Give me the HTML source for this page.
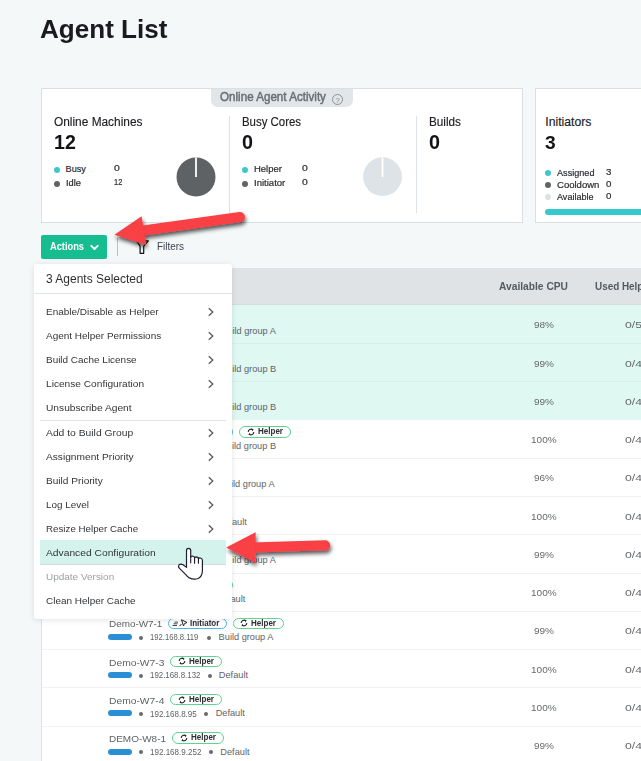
<!DOCTYPE html><html><head><meta charset="utf-8"><style>
html,body{margin:0;padding:0;}
body{width:641px;height:761px;overflow:hidden;position:relative;background:#f5f8f9;font-family:"Liberation Sans",sans-serif;}
.t{position:absolute;white-space:nowrap;line-height:1;transform-origin:0 0;}
.b{position:absolute;}
</style></head><body>
<div class="t" style="left:40.00px;top:15.65px;font-size:26.16px;color:#1b1b1f;font-weight:bold;transform:scaleX(0.997);">Agent List</div>
<div class="b" style="left:41.00px;top:88.00px;width:482.00px;height:135.00px;background:#fff;border:1px solid #d9dfe3;box-sizing:border-box;"></div>
<div class="b" style="left:211.00px;top:89.00px;width:142.00px;height:18.00px;background:#e2e6e9;border-radius:0 0 7px 7px;"></div>
<div class="t" style="left:220.00px;top:92.41px;font-size:11.92px;color:#686d72;transform:scaleX(0.976);-webkit-text-stroke:0.45px #686d72;">Online Agent Activity</div>
<svg class="b" style="left:331px;top:93px;width:13px;height:13px" viewBox="0 0 13 13"><circle cx="6.5" cy="6.5" r="5" fill="none" stroke="#8a9095" stroke-width="1"/><text x="6.5" y="9.6" font-size="8" text-anchor="middle" fill="#8a9095" font-family="Liberation Sans">?</text></svg>
<div class="b" style="left:229.00px;top:116.00px;width:1.00px;height:97.00px;background:#dde2e6;"></div>
<div class="b" style="left:416.00px;top:116.00px;width:1.00px;height:97.00px;background:#dde2e6;"></div>
<div class="t" style="left:54.00px;top:114.93px;font-size:13.08px;color:#202124;transform:scaleX(0.908);-webkit-text-stroke:0.15px #202124;">Online Machines</div>
<div class="t" style="left:54.00px;top:131.77px;font-size:20.35px;color:#121316;font-weight:bold;transform:scaleX(0.963);">12</div>
<div class="b" style="left:53.80px;top:166.65px;width:6.20px;height:6.20px;background:#3ec6cf;border-radius:50%;"></div>
<div class="t" style="left:65.60px;top:164.80px;font-size:9.16px;color:#2b2d30;-webkit-text-stroke:0.2px #2b2d30;">Busy</div>
<div class="t" style="left:114.00px;top:164.12px;font-size:9.01px;color:#2b2d30;transform:scaleX(1.157);-webkit-text-stroke:0.2px #2b2d30;">0</div>
<div class="b" style="left:53.80px;top:180.90px;width:6.20px;height:6.20px;background:#5f6467;border-radius:50%;"></div>
<div class="t" style="left:65.60px;top:179.05px;font-size:9.16px;color:#2b2d30;transform:scaleX(1.016);-webkit-text-stroke:0.2px #2b2d30;">Idle</div>
<div class="t" style="left:114.00px;top:178.37px;font-size:9.01px;color:#2b2d30;transform:scaleX(0.828);-webkit-text-stroke:0.2px #2b2d30;">12</div>
<div class="t" style="left:242.00px;top:114.93px;font-size:13.08px;color:#202124;transform:scaleX(0.873);-webkit-text-stroke:0.15px #202124;">Busy Cores</div>
<div class="t" style="left:242.00px;top:131.77px;font-size:20.35px;color:#121316;font-weight:bold;transform:scaleX(0.972);">0</div>
<div class="b" style="left:241.80px;top:166.65px;width:6.20px;height:6.20px;background:#3ec6cf;border-radius:50%;"></div>
<div class="t" style="left:253.60px;top:164.80px;font-size:9.16px;color:#2b2d30;transform:scaleX(1.034);-webkit-text-stroke:0.2px #2b2d30;">Helper</div>
<div class="t" style="left:302.00px;top:164.12px;font-size:9.01px;color:#2b2d30;transform:scaleX(1.157);-webkit-text-stroke:0.2px #2b2d30;">0</div>
<div class="b" style="left:241.80px;top:180.90px;width:6.20px;height:6.20px;background:#5f6467;border-radius:50%;"></div>
<div class="t" style="left:253.60px;top:179.05px;font-size:9.16px;color:#2b2d30;transform:scaleX(1.042);-webkit-text-stroke:0.2px #2b2d30;">Initiator</div>
<div class="t" style="left:302.00px;top:178.37px;font-size:9.01px;color:#2b2d30;transform:scaleX(1.157);-webkit-text-stroke:0.2px #2b2d30;">0</div>
<div class="t" style="left:429.00px;top:114.93px;font-size:13.08px;color:#202124;transform:scaleX(0.898);-webkit-text-stroke:0.15px #202124;">Builds</div>
<div class="t" style="left:429.00px;top:131.77px;font-size:20.35px;color:#121316;font-weight:bold;transform:scaleX(0.972);">0</div>
<svg class="b" style="left:176px;top:157px;width:40px;height:40px" viewBox="0 0 40 40"><circle cx="20" cy="20" r="19.5" fill="#5e6265"/><rect x="19.1" y="0.5" width="1.8" height="19.5" fill="#fff"/></svg>
<svg class="b" style="left:363px;top:157px;width:40px;height:40px" viewBox="0 0 40 40"><circle cx="19.5" cy="19.7" r="19.4" fill="#dde3e7"/><rect x="18.6" y="0.5" width="1.8" height="19.5" fill="#fff"/></svg>
<div class="b" style="left:535.00px;top:88.00px;width:120.00px;height:135.00px;background:#fff;border:1px solid #d9dfe3;box-sizing:border-box;"></div>
<div class="t" style="left:545.30px;top:115.96px;font-size:12.21px;color:#202124;-webkit-text-stroke:0.15px #202124;">Initiators</div>
<div class="t" style="left:545.30px;top:133.62px;font-size:18.17px;color:#121316;font-weight:bold;transform:scaleX(1.059);">3</div>
<div class="b" style="left:545.20px;top:169.80px;width:6.00px;height:6.00px;background:#3ec6cf;border-radius:50%;"></div>
<div class="t" style="left:557.40px;top:168.55px;font-size:9.16px;color:#2b2d30;transform:scaleX(0.995);-webkit-text-stroke:0.2px #2b2d30;">Assigned</div>
<div class="t" style="left:605.60px;top:167.57px;font-size:9.01px;color:#2b2d30;transform:scaleX(1.077);-webkit-text-stroke:0.2px #2b2d30;">3</div>
<div class="b" style="left:545.20px;top:181.90px;width:6.00px;height:6.00px;background:#5f6467;border-radius:50%;"></div>
<div class="t" style="left:557.40px;top:180.65px;font-size:9.16px;color:#2b2d30;transform:scaleX(1.041);-webkit-text-stroke:0.2px #2b2d30;">Cooldown</div>
<div class="t" style="left:605.60px;top:179.67px;font-size:9.01px;color:#2b2d30;transform:scaleX(1.077);-webkit-text-stroke:0.2px #2b2d30;">0</div>
<div class="b" style="left:545.20px;top:194.00px;width:6.00px;height:6.00px;background:#dde1e3;border-radius:50%;"></div>
<div class="t" style="left:557.40px;top:192.75px;font-size:9.16px;color:#2b2d30;transform:scaleX(0.987);-webkit-text-stroke:0.2px #2b2d30;">Available</div>
<div class="t" style="left:605.60px;top:191.77px;font-size:9.01px;color:#2b2d30;transform:scaleX(1.077);-webkit-text-stroke:0.2px #2b2d30;">0</div>
<div class="b" style="left:545.00px;top:208.80px;width:120.00px;height:6.00px;background:#35c8cc;border-radius:3px;"></div>
<div class="b" style="left:41.00px;top:235.00px;width:66.00px;height:23.75px;background:#16bd90;border-radius:2px;"></div>
<div class="t" style="left:50.00px;top:241.02px;font-size:10.61px;color:#fff;font-weight:bold;transform:scaleX(0.874);">Actions</div>
<svg class="b" style="left:89px;top:243px;width:11px;height:9px" viewBox="0 0 11 9"><path d="M2.3 2.9 L5.5 6 L8.7 2.9" fill="none" stroke="#fff" stroke-width="2" stroke-linecap="round" stroke-linejoin="round"/></svg>
<div class="b" style="left:116.60px;top:237.50px;width:1.30px;height:18.50px;background:#b9bfc4;"></div>
<svg class="b" style="left:134px;top:238px;width:18px;height:18px" viewBox="0 0 18 18"><path d="M2.6 2.8 L14.4 2.8 L9.7 8.2 L9.7 15.3 L6.1 15.3 L6.1 8.2 Z" fill="none" stroke="#111" stroke-width="1.2" stroke-linejoin="round"/></svg>
<div class="t" style="left:157.00px;top:240.26px;font-size:11.63px;color:#3c4150;transform:scaleX(0.853);">Filters</div>
<div class="b" style="left:41.00px;top:268.30px;width:620.00px;height:36.40px;background:#dfe3e6;"></div>
<div class="b" style="left:40.90px;top:304.70px;width:1.00px;height:500.00px;background:#dfe3e6;"></div>
<div class="b" style="left:41.00px;top:303.80px;width:620.00px;height:1.00px;background:#d6dbde;"></div>
<div class="t" style="left:499.30px;top:280.58px;font-size:11.48px;color:#545a60;font-weight:bold;transform:scaleX(0.892);">Available CPU</div>
<div class="t" style="left:595.00px;top:280.58px;font-size:11.48px;color:#545a60;font-weight:bold;transform:scaleX(0.862);">Used Helpers</div>
<div class="b" style="left:41.90px;top:304.90px;width:620.00px;height:38.25px;background:#e0f8f2;"></div>
<div class="t" style="left:533.80px;top:321.32px;font-size:8.72px;color:#65686b;transform:scaleX(1.146);">98%</div>
<div class="t" style="left:624.80px;top:321.32px;font-size:8.72px;color:#65686b;transform:scaleX(1.402);">0/5</div>
<div class="t" style="left:108.50px;top:314.47px;font-size:9.01px;color:#5f6366;transform:scaleX(1.101);">Demo-W1-1</div>
<div class="b" style="left:107.80px;top:327.90px;width:24.30px;height:6.00px;background:#2b8fd6;border-radius:3px;"></div>
<div class="b" style="left:139.00px;top:329.60px;width:4.00px;height:4.00px;background:#666a6e;border-radius:50%;"></div>
<div class="t" style="left:150.30px;top:328.01px;font-size:8.14px;color:#5f6366;transform:scaleX(0.974);">192.168.8.101</div>
<div class="b" style="left:209.06px;top:329.60px;width:4.00px;height:4.00px;background:#666a6e;border-radius:50%;"></div>
<div class="t" style="left:221.12px;top:326.89px;font-size:9.23px;color:#5f6366;">Build group A</div>
<div class="b" style="left:41.90px;top:343.15px;width:620.00px;height:38.25px;background:#e0f8f2;"></div>
<div class="b" style="left:41.90px;top:343.15px;width:620.00px;height:1.00px;background:#d8efe9;"></div>
<div class="t" style="left:533.80px;top:359.57px;font-size:8.72px;color:#65686b;transform:scaleX(1.146);">99%</div>
<div class="t" style="left:624.80px;top:359.57px;font-size:8.72px;color:#65686b;transform:scaleX(1.402);">0/4</div>
<div class="t" style="left:108.50px;top:352.72px;font-size:9.01px;color:#5f6366;transform:scaleX(1.101);">Demo-W2-1</div>
<div class="b" style="left:107.80px;top:366.15px;width:24.30px;height:6.00px;background:#2b8fd6;border-radius:3px;"></div>
<div class="b" style="left:139.00px;top:367.85px;width:4.00px;height:4.00px;background:#666a6e;border-radius:50%;"></div>
<div class="t" style="left:150.30px;top:366.26px;font-size:8.14px;color:#5f6366;transform:scaleX(0.974);">192.168.8.102</div>
<div class="b" style="left:208.96px;top:367.85px;width:4.00px;height:4.00px;background:#666a6e;border-radius:50%;"></div>
<div class="t" style="left:220.92px;top:365.14px;font-size:9.23px;color:#5f6366;">Build group B</div>
<div class="b" style="left:41.90px;top:381.40px;width:620.00px;height:38.25px;background:#e0f8f2;"></div>
<div class="b" style="left:41.90px;top:381.40px;width:620.00px;height:1.00px;background:#d8efe9;"></div>
<div class="t" style="left:533.80px;top:397.82px;font-size:8.72px;color:#65686b;transform:scaleX(1.146);">99%</div>
<div class="t" style="left:624.80px;top:397.82px;font-size:8.72px;color:#65686b;transform:scaleX(1.402);">0/4</div>
<div class="t" style="left:108.50px;top:390.97px;font-size:9.01px;color:#5f6366;transform:scaleX(1.101);">Demo-W3-1</div>
<div class="b" style="left:107.80px;top:404.40px;width:24.30px;height:6.00px;background:#2b8fd6;border-radius:3px;"></div>
<div class="b" style="left:139.00px;top:406.10px;width:4.00px;height:4.00px;background:#666a6e;border-radius:50%;"></div>
<div class="t" style="left:150.30px;top:404.51px;font-size:8.14px;color:#5f6366;transform:scaleX(0.974);">192.168.8.103</div>
<div class="b" style="left:208.96px;top:406.10px;width:4.00px;height:4.00px;background:#666a6e;border-radius:50%;"></div>
<div class="t" style="left:220.92px;top:403.39px;font-size:9.23px;color:#5f6366;">Build group B</div>
<div class="b" style="left:41.90px;top:419.65px;width:620.00px;height:38.25px;background:#ffffff;"></div>
<div class="t" style="left:531.00px;top:436.07px;font-size:8.72px;color:#65686b;transform:scaleX(1.148);">100%</div>
<div class="t" style="left:624.80px;top:436.07px;font-size:8.72px;color:#65686b;transform:scaleX(1.402);">0/4</div>
<div class="t" style="left:108.50px;top:429.22px;font-size:9.01px;color:#5f6366;transform:scaleX(1.229);">Demo-W4-1</div>
<div class="b" style="left:107.80px;top:442.65px;width:24.30px;height:6.00px;background:#2b8fd6;border-radius:3px;"></div>
<div class="b" style="left:139.00px;top:444.35px;width:4.00px;height:4.00px;background:#666a6e;border-radius:50%;"></div>
<div class="t" style="left:150.30px;top:442.76px;font-size:8.14px;color:#5f6366;transform:scaleX(0.974);">192.168.8.104</div>
<div class="b" style="left:208.86px;top:444.35px;width:4.00px;height:4.00px;background:#666a6e;border-radius:50%;"></div>
<div class="t" style="left:220.72px;top:441.64px;font-size:9.23px;color:#5f6366;">Build group B</div>
<div class="b" style="left:174.60px;top:426.35px;width:58.8px;height:11.2px;border:1px solid #4cb5e6;border-radius:6px;box-sizing:border-box;background:#fff"></div>
<svg class="b" style="left:178.60px;top:427.85px;width:16px;height:8px" viewBox="0 0 16 8"><path d="M0.5 6.5 H5 M1.5 4.8 H5.5 M2.5 3.1 H6" stroke="#333" stroke-width="0.9"/><path d="M9.5 0.8 L15 3.5 L12.5 4.5 L11.5 7 Z M9.5 5 L7.5 7.2" fill="none" stroke="#222" stroke-width="1"/></svg>
<div class="t" style="left:196.60px;top:427.30px;font-size:9.16px;color:#2a2d31;font-weight:bold;transform:scaleX(0.873);">Initiator</div>
<div class="b" style="left:239.00px;top:426.35px;width:51.5px;height:11.2px;border:1px solid #5dd590;border-radius:6px;box-sizing:border-box;background:#fff"></div>
<svg class="b" style="left:246.60px;top:427.95px;width:8px;height:8px" viewBox="0 0 8 8"><path d="M1.2 4 A2.8 2.8 0 0 1 5.8 1.8 M6.8 4 A2.8 2.8 0 0 1 2.2 6.2" fill="none" stroke="#222" stroke-width="1.1"/><path d="M4.6 0.6 L6.6 1.6 L5.4 3.2Z M3.4 7.4 L1.4 6.4 L2.6 4.8Z" fill="#222"/></svg>
<div class="t" style="left:257.70px;top:427.30px;font-size:9.16px;color:#2a2d31;font-weight:bold;transform:scaleX(0.877);">Helper</div>
<div class="b" style="left:41.90px;top:457.90px;width:620.00px;height:38.25px;background:#ffffff;"></div>
<div class="b" style="left:41.90px;top:457.90px;width:620.00px;height:1.00px;background:#f0f2f3;"></div>
<div class="t" style="left:533.80px;top:474.32px;font-size:8.72px;color:#65686b;transform:scaleX(1.146);">96%</div>
<div class="t" style="left:624.80px;top:474.32px;font-size:8.72px;color:#65686b;transform:scaleX(1.402);">0/4</div>
<div class="t" style="left:108.50px;top:467.47px;font-size:9.01px;color:#5f6366;transform:scaleX(1.101);">Demo-W5-1</div>
<div class="b" style="left:107.80px;top:480.90px;width:24.30px;height:6.00px;background:#2b8fd6;border-radius:3px;"></div>
<div class="b" style="left:139.00px;top:482.60px;width:4.00px;height:4.00px;background:#666a6e;border-radius:50%;"></div>
<div class="t" style="left:150.30px;top:481.01px;font-size:8.14px;color:#5f6366;transform:scaleX(0.974);">192.168.8.105</div>
<div class="b" style="left:208.36px;top:482.60px;width:4.00px;height:4.00px;background:#666a6e;border-radius:50%;"></div>
<div class="t" style="left:219.72px;top:479.89px;font-size:9.23px;color:#5f6366;">Build group A</div>
<div class="b" style="left:41.90px;top:496.15px;width:620.00px;height:38.25px;background:#ffffff;"></div>
<div class="b" style="left:41.90px;top:496.15px;width:620.00px;height:1.00px;background:#f0f2f3;"></div>
<div class="t" style="left:531.00px;top:512.57px;font-size:8.72px;color:#65686b;transform:scaleX(1.148);">100%</div>
<div class="t" style="left:624.80px;top:512.57px;font-size:8.72px;color:#65686b;transform:scaleX(1.402);">0/4</div>
<div class="t" style="left:108.50px;top:505.72px;font-size:9.01px;color:#5f6366;transform:scaleX(1.101);">Demo-W5-2</div>
<div class="b" style="left:107.80px;top:519.15px;width:24.30px;height:6.00px;background:#2b8fd6;border-radius:3px;"></div>
<div class="b" style="left:139.00px;top:520.85px;width:4.00px;height:4.00px;background:#666a6e;border-radius:50%;"></div>
<div class="t" style="left:150.30px;top:519.26px;font-size:8.14px;color:#5f6366;transform:scaleX(0.974);">192.168.8.106</div>
<div class="b" style="left:207.31px;top:520.85px;width:4.00px;height:4.00px;background:#666a6e;border-radius:50%;"></div>
<div class="t" style="left:217.63px;top:518.14px;font-size:9.23px;color:#5f6366;">Default</div>
<div class="b" style="left:41.90px;top:534.40px;width:620.00px;height:38.25px;background:#ffffff;"></div>
<div class="b" style="left:41.90px;top:534.40px;width:620.00px;height:1.00px;background:#f0f2f3;"></div>
<div class="t" style="left:533.80px;top:550.82px;font-size:8.72px;color:#65686b;transform:scaleX(1.146);">99%</div>
<div class="t" style="left:624.80px;top:550.82px;font-size:8.72px;color:#65686b;transform:scaleX(1.402);">0/4</div>
<div class="t" style="left:108.50px;top:543.97px;font-size:9.01px;color:#5f6366;transform:scaleX(1.101);">Demo-W6-1</div>
<div class="b" style="left:107.80px;top:557.40px;width:24.30px;height:6.00px;background:#2b8fd6;border-radius:3px;"></div>
<div class="b" style="left:139.00px;top:559.10px;width:4.00px;height:4.00px;background:#666a6e;border-radius:50%;"></div>
<div class="t" style="left:150.30px;top:557.51px;font-size:8.14px;color:#5f6366;transform:scaleX(0.974);">192.168.8.107</div>
<div class="b" style="left:209.01px;top:559.10px;width:4.00px;height:4.00px;background:#666a6e;border-radius:50%;"></div>
<div class="t" style="left:221.02px;top:556.39px;font-size:9.23px;color:#5f6366;">Build group A</div>
<div class="b" style="left:41.90px;top:572.65px;width:620.00px;height:38.25px;background:#ffffff;"></div>
<div class="b" style="left:41.90px;top:572.65px;width:620.00px;height:1.00px;background:#f0f2f3;"></div>
<div class="t" style="left:531.00px;top:589.07px;font-size:8.72px;color:#65686b;transform:scaleX(1.148);">100%</div>
<div class="t" style="left:624.80px;top:589.07px;font-size:8.72px;color:#65686b;transform:scaleX(1.402);">0/4</div>
<div class="t" style="left:108.50px;top:582.22px;font-size:9.01px;color:#5f6366;transform:scaleX(1.373);">Demo-W6-2</div>
<div class="b" style="left:107.80px;top:595.65px;width:24.30px;height:6.00px;background:#2b8fd6;border-radius:3px;"></div>
<div class="b" style="left:139.00px;top:597.35px;width:4.00px;height:4.00px;background:#666a6e;border-radius:50%;"></div>
<div class="t" style="left:150.30px;top:595.76px;font-size:8.14px;color:#5f6366;transform:scaleX(0.974);">192.168.8.108</div>
<div class="b" style="left:206.56px;top:597.35px;width:4.00px;height:4.00px;background:#666a6e;border-radius:50%;"></div>
<div class="t" style="left:216.13px;top:594.64px;font-size:9.23px;color:#5f6366;">Default</div>
<div class="b" style="left:181.60px;top:579.35px;width:51.5px;height:11.2px;border:1px solid #5dd590;border-radius:6px;box-sizing:border-box;background:#fff"></div>
<svg class="b" style="left:189.20px;top:580.95px;width:8px;height:8px" viewBox="0 0 8 8"><path d="M1.2 4 A2.8 2.8 0 0 1 5.8 1.8 M6.8 4 A2.8 2.8 0 0 1 2.2 6.2" fill="none" stroke="#222" stroke-width="1.1"/><path d="M4.6 0.6 L6.6 1.6 L5.4 3.2Z M3.4 7.4 L1.4 6.4 L2.6 4.8Z" fill="#222"/></svg>
<div class="t" style="left:200.30px;top:580.30px;font-size:9.16px;color:#2a2d31;font-weight:bold;transform:scaleX(0.877);">Helper</div>
<div class="b" style="left:41.90px;top:610.90px;width:620.00px;height:38.25px;background:#ffffff;"></div>
<div class="b" style="left:41.90px;top:610.90px;width:620.00px;height:1.00px;background:#f0f2f3;"></div>
<div class="t" style="left:533.80px;top:627.32px;font-size:8.72px;color:#65686b;transform:scaleX(1.146);">99%</div>
<div class="t" style="left:624.80px;top:627.32px;font-size:8.72px;color:#65686b;transform:scaleX(1.402);">0/4</div>
<div class="t" style="left:108.50px;top:620.47px;font-size:9.01px;color:#5f6366;transform:scaleX(1.099);">Demo-W7-1</div>
<div class="b" style="left:107.80px;top:633.90px;width:24.30px;height:6.00px;background:#2b8fd6;border-radius:3px;"></div>
<div class="b" style="left:139.00px;top:635.60px;width:4.00px;height:4.00px;background:#666a6e;border-radius:50%;"></div>
<div class="t" style="left:150.30px;top:634.01px;font-size:8.14px;color:#5f6366;transform:scaleX(0.941);">192.168.8.119</div>
<div class="b" style="left:206.66px;top:635.60px;width:4.00px;height:4.00px;background:#666a6e;border-radius:50%;"></div>
<div class="t" style="left:218.62px;top:632.89px;font-size:9.23px;color:#5f6366;">Build group A</div>
<div class="b" style="left:168.30px;top:617.60px;width:58.8px;height:11.2px;border:1px solid #4cb5e6;border-radius:6px;box-sizing:border-box;background:#fff"></div>
<svg class="b" style="left:172.30px;top:619.10px;width:16px;height:8px" viewBox="0 0 16 8"><path d="M0.5 6.5 H5 M1.5 4.8 H5.5 M2.5 3.1 H6" stroke="#333" stroke-width="0.9"/><path d="M9.5 0.8 L15 3.5 L12.5 4.5 L11.5 7 Z M9.5 5 L7.5 7.2" fill="none" stroke="#222" stroke-width="1"/></svg>
<div class="t" style="left:190.30px;top:618.55px;font-size:9.16px;color:#2a2d31;font-weight:bold;transform:scaleX(0.873);">Initiator</div>
<div class="b" style="left:232.70px;top:617.60px;width:51.5px;height:11.2px;border:1px solid #5dd590;border-radius:6px;box-sizing:border-box;background:#fff"></div>
<svg class="b" style="left:240.30px;top:619.20px;width:8px;height:8px" viewBox="0 0 8 8"><path d="M1.2 4 A2.8 2.8 0 0 1 5.8 1.8 M6.8 4 A2.8 2.8 0 0 1 2.2 6.2" fill="none" stroke="#222" stroke-width="1.1"/><path d="M4.6 0.6 L6.6 1.6 L5.4 3.2Z M3.4 7.4 L1.4 6.4 L2.6 4.8Z" fill="#222"/></svg>
<div class="t" style="left:251.40px;top:618.55px;font-size:9.16px;color:#2a2d31;font-weight:bold;transform:scaleX(0.877);">Helper</div>
<div class="b" style="left:41.90px;top:649.15px;width:620.00px;height:38.25px;background:#ffffff;"></div>
<div class="b" style="left:41.90px;top:649.15px;width:620.00px;height:1.00px;background:#f0f2f3;"></div>
<div class="t" style="left:531.00px;top:665.57px;font-size:8.72px;color:#65686b;transform:scaleX(1.148);">100%</div>
<div class="t" style="left:624.80px;top:665.57px;font-size:8.72px;color:#65686b;transform:scaleX(1.402);">0/4</div>
<div class="t" style="left:108.50px;top:658.72px;font-size:9.01px;color:#5f6366;transform:scaleX(1.143);">Demo-W7-3</div>
<div class="b" style="left:107.80px;top:672.15px;width:24.30px;height:6.00px;background:#2b8fd6;border-radius:3px;"></div>
<div class="b" style="left:139.00px;top:673.85px;width:4.00px;height:4.00px;background:#666a6e;border-radius:50%;"></div>
<div class="t" style="left:150.30px;top:672.26px;font-size:8.14px;color:#5f6366;transform:scaleX(0.970);">192.168.8.132</div>
<div class="b" style="left:207.81px;top:673.85px;width:4.00px;height:4.00px;background:#666a6e;border-radius:50%;"></div>
<div class="t" style="left:218.83px;top:671.14px;font-size:9.23px;color:#5f6366;">Default</div>
<div class="b" style="left:170.40px;top:655.85px;width:51.5px;height:11.2px;border:1px solid #5dd590;border-radius:6px;box-sizing:border-box;background:#fff"></div>
<svg class="b" style="left:178.00px;top:657.45px;width:8px;height:8px" viewBox="0 0 8 8"><path d="M1.2 4 A2.8 2.8 0 0 1 5.8 1.8 M6.8 4 A2.8 2.8 0 0 1 2.2 6.2" fill="none" stroke="#222" stroke-width="1.1"/><path d="M4.6 0.6 L6.6 1.6 L5.4 3.2Z M3.4 7.4 L1.4 6.4 L2.6 4.8Z" fill="#222"/></svg>
<div class="t" style="left:189.10px;top:656.80px;font-size:9.16px;color:#2a2d31;font-weight:bold;transform:scaleX(0.877);">Helper</div>
<div class="b" style="left:41.90px;top:687.40px;width:620.00px;height:38.25px;background:#ffffff;"></div>
<div class="b" style="left:41.90px;top:687.40px;width:620.00px;height:1.00px;background:#f0f2f3;"></div>
<div class="t" style="left:531.00px;top:703.82px;font-size:8.72px;color:#65686b;transform:scaleX(1.148);">100%</div>
<div class="t" style="left:624.80px;top:703.82px;font-size:8.72px;color:#65686b;transform:scaleX(1.402);">0/4</div>
<div class="t" style="left:108.50px;top:696.97px;font-size:9.01px;color:#5f6366;transform:scaleX(1.143);">Demo-W7-4</div>
<div class="b" style="left:107.80px;top:710.40px;width:24.30px;height:6.00px;background:#2b8fd6;border-radius:3px;"></div>
<div class="b" style="left:139.00px;top:712.10px;width:4.00px;height:4.00px;background:#666a6e;border-radius:50%;"></div>
<div class="t" style="left:150.30px;top:710.51px;font-size:8.14px;color:#5f6366;transform:scaleX(0.985);">192.168.8.95</div>
<div class="b" style="left:204.36px;top:712.10px;width:4.00px;height:4.00px;background:#666a6e;border-radius:50%;"></div>
<div class="t" style="left:215.63px;top:709.39px;font-size:9.23px;color:#5f6366;">Default</div>
<div class="b" style="left:170.40px;top:694.10px;width:51.5px;height:11.2px;border:1px solid #5dd590;border-radius:6px;box-sizing:border-box;background:#fff"></div>
<svg class="b" style="left:178.00px;top:695.70px;width:8px;height:8px" viewBox="0 0 8 8"><path d="M1.2 4 A2.8 2.8 0 0 1 5.8 1.8 M6.8 4 A2.8 2.8 0 0 1 2.2 6.2" fill="none" stroke="#222" stroke-width="1.1"/><path d="M4.6 0.6 L6.6 1.6 L5.4 3.2Z M3.4 7.4 L1.4 6.4 L2.6 4.8Z" fill="#222"/></svg>
<div class="t" style="left:189.10px;top:695.05px;font-size:9.16px;color:#2a2d31;font-weight:bold;transform:scaleX(0.877);">Helper</div>
<div class="b" style="left:41.90px;top:725.65px;width:620.00px;height:38.25px;background:#ffffff;"></div>
<div class="b" style="left:41.90px;top:725.65px;width:620.00px;height:1.00px;background:#f0f2f3;"></div>
<div class="t" style="left:533.80px;top:742.07px;font-size:8.72px;color:#65686b;transform:scaleX(1.146);">99%</div>
<div class="t" style="left:624.80px;top:742.07px;font-size:8.72px;color:#65686b;transform:scaleX(1.402);">0/4</div>
<div class="t" style="left:108.50px;top:735.22px;font-size:9.01px;color:#5f6366;transform:scaleX(1.107);">DEMO-W8-1</div>
<div class="b" style="left:107.80px;top:748.65px;width:24.30px;height:6.00px;background:#2b8fd6;border-radius:3px;"></div>
<div class="b" style="left:139.00px;top:750.35px;width:4.00px;height:4.00px;background:#666a6e;border-radius:50%;"></div>
<div class="t" style="left:150.30px;top:748.76px;font-size:8.14px;color:#5f6366;transform:scaleX(0.989);">192.168.9.252</div>
<div class="b" style="left:209.06px;top:750.35px;width:4.00px;height:4.00px;background:#666a6e;border-radius:50%;"></div>
<div class="t" style="left:220.33px;top:747.64px;font-size:9.23px;color:#5f6366;">Default</div>
<div class="b" style="left:172.00px;top:732.35px;width:51.5px;height:11.2px;border:1px solid #5dd590;border-radius:6px;box-sizing:border-box;background:#fff"></div>
<svg class="b" style="left:179.60px;top:733.95px;width:8px;height:8px" viewBox="0 0 8 8"><path d="M1.2 4 A2.8 2.8 0 0 1 5.8 1.8 M6.8 4 A2.8 2.8 0 0 1 2.2 6.2" fill="none" stroke="#222" stroke-width="1.1"/><path d="M4.6 0.6 L6.6 1.6 L5.4 3.2Z M3.4 7.4 L1.4 6.4 L2.6 4.8Z" fill="#222"/></svg>
<div class="t" style="left:190.70px;top:733.30px;font-size:9.16px;color:#2a2d31;font-weight:bold;transform:scaleX(0.877);">Helper</div>
<div class="b" style="left:34px;top:264px;width:198px;height:354.7px;background:#fff;border-radius:3px;box-shadow:0 1px 6px rgba(0,0,0,0.11);z-index:20"></div>
<div class="t" style="left:46.20px;top:272.90px;font-size:12.65px;color:#2e3033;transform:scaleX(0.948);z-index:21;">3 Agents Selected</div>
<div class="b" style="left:34.00px;top:293.00px;width:198.00px;height:1.00px;background:#dfe3e6;z-index:21;"></div>
<div class="b" style="left:40.10px;top:540.10px;width:186.00px;height:24.20px;background:#d5f3ed;z-index:21;"></div>
<div class="b" style="left:40.10px;top:563.60px;width:186.00px;height:0.80px;background:#d3dcdb;z-index:21;"></div>
<div class="b" style="left:40.00px;top:420.00px;width:186.00px;height:1.00px;background:#dfe3e6;z-index:21;"></div>
<div class="t" style="left:46.00px;top:307.38px;font-size:9.59px;color:#313437;transform:scaleX(1.042);z-index:22;">Enable/Disable as Helper</div>
<svg class="b" style="left:206px;top:306.90px;width:10px;height:10px;z-index:22" viewBox="0 0 10 10"><path d="M2.8 1.2 L6.8 5 L2.8 8.8" fill="none" stroke="#55595d" stroke-width="1.3"/></svg>
<div class="t" style="left:46.00px;top:331.38px;font-size:9.59px;color:#313437;transform:scaleX(1.040);z-index:22;">Agent Helper Permissions</div>
<svg class="b" style="left:206px;top:330.90px;width:10px;height:10px;z-index:22" viewBox="0 0 10 10"><path d="M2.8 1.2 L6.8 5 L2.8 8.8" fill="none" stroke="#55595d" stroke-width="1.3"/></svg>
<div class="t" style="left:46.00px;top:355.38px;font-size:9.59px;color:#313437;transform:scaleX(1.038);z-index:22;">Build Cache License</div>
<svg class="b" style="left:206px;top:354.90px;width:10px;height:10px;z-index:22" viewBox="0 0 10 10"><path d="M2.8 1.2 L6.8 5 L2.8 8.8" fill="none" stroke="#55595d" stroke-width="1.3"/></svg>
<div class="t" style="left:46.00px;top:379.38px;font-size:9.59px;color:#313437;transform:scaleX(1.059);z-index:22;">License Configuration</div>
<svg class="b" style="left:206px;top:378.90px;width:10px;height:10px;z-index:22" viewBox="0 0 10 10"><path d="M2.8 1.2 L6.8 5 L2.8 8.8" fill="none" stroke="#55595d" stroke-width="1.3"/></svg>
<div class="t" style="left:46.00px;top:403.38px;font-size:9.59px;color:#313437;transform:scaleX(1.065);z-index:22;">Unsubscribe Agent</div>
<div class="t" style="left:46.00px;top:428.08px;font-size:9.59px;color:#313437;transform:scaleX(1.077);z-index:22;">Add to Build Group</div>
<svg class="b" style="left:206px;top:427.60px;width:10px;height:10px;z-index:22" viewBox="0 0 10 10"><path d="M2.8 1.2 L6.8 5 L2.8 8.8" fill="none" stroke="#55595d" stroke-width="1.3"/></svg>
<div class="t" style="left:46.00px;top:452.08px;font-size:9.59px;color:#313437;transform:scaleX(1.062);z-index:22;">Assignment Priority</div>
<svg class="b" style="left:206px;top:451.60px;width:10px;height:10px;z-index:22" viewBox="0 0 10 10"><path d="M2.8 1.2 L6.8 5 L2.8 8.8" fill="none" stroke="#55595d" stroke-width="1.3"/></svg>
<div class="t" style="left:46.00px;top:476.08px;font-size:9.59px;color:#313437;transform:scaleX(1.055);z-index:22;">Build Priority</div>
<svg class="b" style="left:206px;top:475.60px;width:10px;height:10px;z-index:22" viewBox="0 0 10 10"><path d="M2.8 1.2 L6.8 5 L2.8 8.8" fill="none" stroke="#55595d" stroke-width="1.3"/></svg>
<div class="t" style="left:46.00px;top:500.08px;font-size:9.59px;color:#313437;transform:scaleX(1.031);z-index:22;">Log Level</div>
<svg class="b" style="left:206px;top:499.60px;width:10px;height:10px;z-index:22" viewBox="0 0 10 10"><path d="M2.8 1.2 L6.8 5 L2.8 8.8" fill="none" stroke="#55595d" stroke-width="1.3"/></svg>
<div class="t" style="left:46.00px;top:524.08px;font-size:9.59px;color:#313437;transform:scaleX(1.018);z-index:22;">Resize Helper Cache</div>
<svg class="b" style="left:206px;top:523.60px;width:10px;height:10px;z-index:22" viewBox="0 0 10 10"><path d="M2.8 1.2 L6.8 5 L2.8 8.8" fill="none" stroke="#55595d" stroke-width="1.3"/></svg>
<div class="t" style="left:46.00px;top:548.08px;font-size:9.59px;color:#313437;transform:scaleX(1.072);z-index:22;">Advanced Configuration</div>
<div class="t" style="left:46.00px;top:572.08px;font-size:9.59px;color:#9a9ea2;transform:scaleX(1.041);z-index:22;">Update Version</div>
<div class="t" style="left:46.00px;top:596.08px;font-size:9.59px;color:#313437;transform:scaleX(1.039);z-index:22;">Clean Helper Cache</div>
<svg class="b" style="left:0;top:0;width:641px;height:761px;z-index:30" viewBox="0 0 641 761">
<defs><filter id="sh" x="-20%" y="-50%" width="140%" height="200%"><feGaussianBlur in="SourceAlpha" stdDeviation="1.9"/><feOffset dx="1.2" dy="2.8" result="o"/><feComponentTransfer><feFuncA type="linear" slope="0.68"/></feComponentTransfer><feMerge><feMergeNode/><feMergeNode in="SourceGraphic"/></feMerge></filter></defs>
<g filter="url(#sh)">
<path d="M240 217 L143.5 230.5" stroke="#f83f44" stroke-width="10" stroke-linecap="round"/>
<path d="M114.4 234.8 L141.6 216.2 L146.3 245 Z" fill="#f83f44"/>
<path d="M325.2 545.3 L252 547.5" stroke="#f83f44" stroke-width="10" stroke-linecap="round"/>
<path d="M226.2 547.4 L255.6 532.2 L255.6 563 Z" fill="#f83f44"/>
</g></svg>
<svg class="b" style="left:170px;top:540px;width:45px;height:45px;z-index:31" viewBox="0 0 641 641">
<path d="M235 390 L235 150 Q235 118 262 118 Q295 118 295 150 L295 245 Q298 228 322 228 Q350 230 350 255 Q352 240 378 240 Q405 244 405 268 Q410 255 432 256 Q462 262 462 292 L462 430 Q462 520 400 548 Q340 572 275 540 Q250 525 222 490 L135 405 Q110 380 128 355 Q150 335 190 355 Z" fill="#fff" stroke="#1c2030" stroke-width="17" stroke-linejoin="round"/>
<path d="M295 240 L295 325 M350 252 L350 330 M405 265 L405 330" stroke="#1c2030" stroke-width="16" stroke-linecap="round"/>
</svg>
</body></html>
